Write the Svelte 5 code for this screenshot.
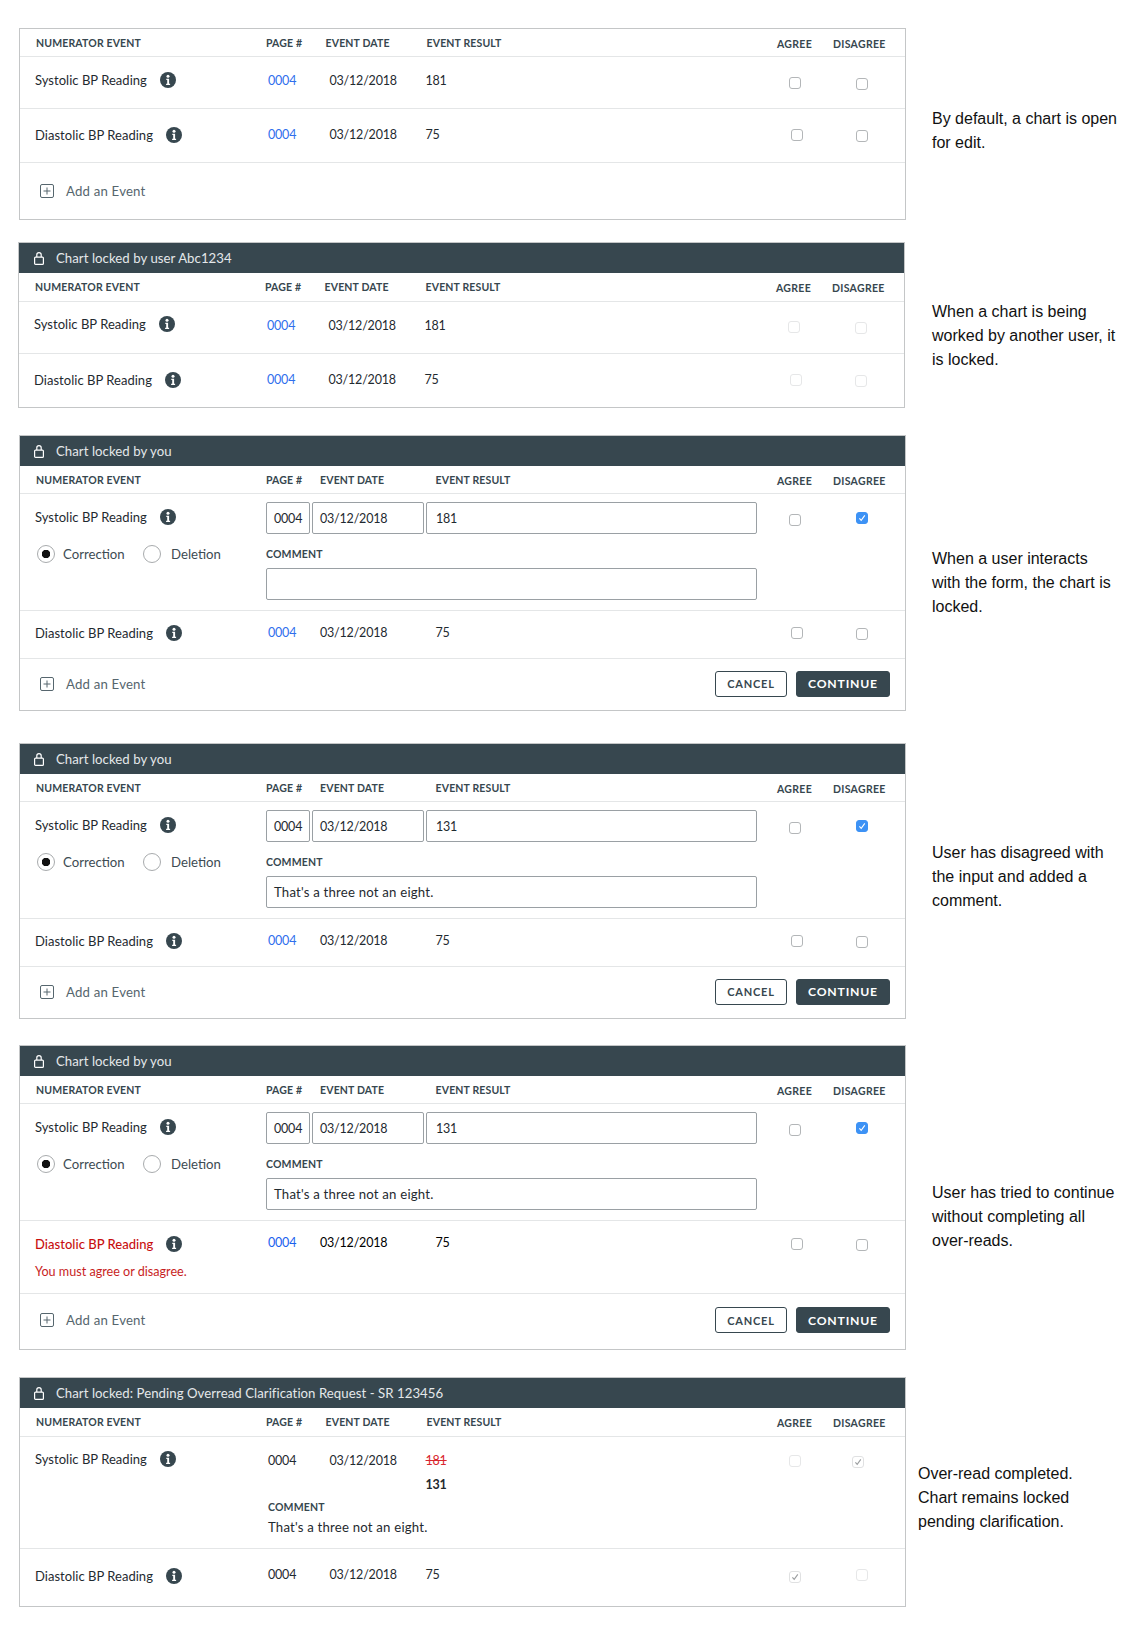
<script lang="ts">
	interface Row {
		name: string;
		result?: string;
		corrected?: string;
		comment?: string;
		agree?: string;
		disagree?: string;
		error?: boolean;
	}

	interface Chart {
		bar?: string;
		mode: 'view' | 'form';
		link?: boolean;
		actions?: boolean;
		add?: boolean;
		rows: Row[];
		note: string[];
		cls: string;
	}

	const noComment = '';
	const threeNotEight = "That's a three not an eight.";

	const charts: Chart[] = [
		{
			cls: 'c1',
			mode: 'view',
			link: true,
			add: true,
			rows: [
				{ name: 'Systolic BP Reading', result: '181' },
				{ name: 'Diastolic BP Reading', result: '75' }
			],
			note: ['By default, a chart is open', 'for edit.']
		},
		{
			cls: 'c2',
			bar: 'Chart locked by user Abc1234',
			mode: 'view',
			link: true,
			rows: [
				{ name: 'Systolic BP Reading', result: '181', agree: 'off', disagree: 'off' },
				{ name: 'Diastolic BP Reading', result: '75', agree: 'off', disagree: 'off' }
			],
			note: ['When a chart is being', 'worked by another user, it', 'is locked.']
		},
		{
			cls: 'c3',
			bar: 'Chart locked by you',
			mode: 'form',
			link: true,
			add: true,
			actions: true,
			rows: [
				{ name: 'Systolic BP Reading', result: '181', comment: noComment, disagree: 'on' },
				{ name: 'Diastolic BP Reading', result: '75' }
			],
			note: ['When a user interacts', 'with the form, the chart is', 'locked.']
		},
		{
			cls: 'c4',
			bar: 'Chart locked by you',
			mode: 'form',
			link: true,
			add: true,
			actions: true,
			rows: [
				{ name: 'Systolic BP Reading', result: '131', comment: threeNotEight, disagree: 'on' },
				{ name: 'Diastolic BP Reading', result: '75' }
			],
			note: ['User has disagreed with', 'the input and added a', 'comment.']
		},
		{
			cls: 'c5',
			bar: 'Chart locked by you',
			mode: 'form',
			link: true,
			add: true,
			actions: true,
			rows: [
				{ name: 'Systolic BP Reading', result: '131', comment: threeNotEight, disagree: 'on' },
				{ name: 'Diastolic BP Reading', result: '75', error: true }
			],
			note: ['User has tried to continue', 'without completing all', 'over-reads.']
		},
		{
			cls: 'c6',
			bar: 'Chart locked: Pending Overread Clarification Request - SR 123456',
			mode: 'view',
			rows: [
				{
					name: 'Systolic BP Reading',
					result: '181',
					corrected: '131',
					comment: threeNotEight,
					agree: 'off',
					disagree: 'done'
				},
				{ name: 'Diastolic BP Reading', result: '75', agree: 'done', disagree: 'off' }
			],
			note: ['Over-read completed.', 'Chart remains locked', 'pending clarification.']
		}
	];
</script>

{#snippet box(state: string | undefined, cls: string)}
	<span class="box {cls} {state ?? ''}">
		{#if state === 'on' || state === 'done'}
			<svg viewBox="0 0 12 12" width="12" height="12"><path d="M3.4 6.3 5.2 8.4 8.8 3.4" fill="none" stroke="currentColor" stroke-width="1.1" /></svg>
		{/if}
	</span>
{/snippet}

{#snippet info()}
	<svg class="info" viewBox="0 0 16 16" width="16" height="16">
		<circle cx="8" cy="8" r="8" fill="#37474f" />
		<circle cx="8" cy="4.3" r="1.5" fill="#fff" />
		<path d="M6.3 6.7H9.1v5h1v1.4H6.1v-1.4h1.1V8H6.3z" fill="#fff" />
	</svg>
{/snippet}

<div class="page">
	{#each charts as chart}
		<section class="chart {chart.cls}">
			<div class="panel">
				{#if chart.bar}
					<div class="bar">
						<svg class="lock" viewBox="0 0 10 13" width="10" height="13">
							<path d="M2.8 5.5V2.8a2.2 2.2 0 0 1 4.4 0v2.7" fill="none" stroke="#fff" stroke-width="1.2" />
							<rect x="0.6" y="5.1" width="8.8" height="7.3" rx="1" fill="#37474f" stroke="#fff" stroke-width="1.2" />
						</svg>
						<span>{chart.bar}</span>
					</div>
				{/if}

				<div class="head {chart.mode}">
					<span class="h-name">Numerator Event</span>
					<span>Page #</span>
					<span>Event Date</span>
					<span>Event Result</span>
					<span class="h-check">Agree</span>
					<span class="h-check">Disagree</span>
				</div>

				{#each chart.rows as row, i}
					<div class="row r{i + 1} {chart.mode}" class:err={row.error}>
						<div class="name-cell">
							<div class="name"><span>{row.name}</span>{@render info()}</div>
							{#if chart.mode === 'form' && row.comment !== undefined}
								<div class="radios">
									<span class="radio on"></span><span class="radio-label">Correction</span>
									<span class="radio"></span><span class="radio-label">Deletion</span>
								</div>
							{/if}
							{#if row.error}
								<div class="err-msg">You must agree or disagree.</div>
							{/if}
						</div>

						{#if chart.mode === 'form' && row.comment !== undefined}
							<div class="fields">
								<div class="inputs">
									<span class="input pg">0004</span>
									<span class="input dt">03/12/2018</span>
									<span class="input rs">{row.result}</span>
								</div>
								<div class="label">Comment</div>
								<span class="input cm">{row.comment}</span>
							</div>
						{:else if row.comment !== undefined}
							<span class="val pg-val">0004</span>
							<span class="val dt-val">03/12/2018</span>
							<span class="val rs-val"><s>{row.result}</s><b>{row.corrected}</b></span>
							<div class="read-comment">
								<div class="label">Comment</div>
								<div class="comment-text">{row.comment}</div>
							</div>
						{:else}
							<span class="val pg-val" class:link={chart.link}>0004</span>
							<span class="val dt-val">03/12/2018</span>
							<span class="val rs-val">{row.result}</span>
						{/if}

						{@render box(row.agree, 'agree')}
						{@render box(row.disagree, 'disagree')}
					</div>
				{/each}

				{#if chart.add}
					<div class="foot">
						<svg class="plus" viewBox="0 0 14 14" width="14" height="14">
							<rect x="0.5" y="0.5" width="13" height="13" rx="1.5" fill="none" stroke="#56666e" />
							<path d="M7 3.5v7M3.5 7h7" stroke="#56666e" />
						</svg>
						<span class="add">Add an Event</span>
						{#if chart.actions}
							<button class="btn cancel">Cancel</button>
							<button class="btn continue">Continue</button>
						{/if}
					</div>
				{/if}
			</div>

			<div class="note">
				{#each chart.note as line}
					<div>{line}</div>
				{/each}
			</div>
		</section>
	{/each}
</div>

<style>
	:global(body) {
		margin: 0;
		background: #fff;
	}

	.page {
		width: 1140px;
		height: 1631px;
		padding-top: 28px;
		box-sizing: border-box;
		font-family: Lato, sans-serif;
		font-size: 13.2px;
		color: #1f2a30;
	}

	.chart {
		display: flex;
		align-items: flex-start;
		padding-left: 19px;
	}

	.c2 { margin-top: 22px; padding-left: 18px; }
	.c3 { margin-top: 27px; }
	.c4 { margin-top: 32px; }
	.c5 { margin-top: 26px; }
	.c6 { margin-top: 27px; }

	.panel {
		flex: none;
		width: 887px;
		box-sizing: border-box;
		border: 1px solid #c4c6c7;
	}

	.note {
		flex: none;
		margin-left: 26px;
		font-family: 'Liberation Sans', Arial, sans-serif;
		font-size: 16px;
		line-height: 24px;
		color: #111;
	}

	.c1 .note { margin-top: 79px; }
	.c2 .note { margin-top: 58px; margin-left: 27px; }
	.c3 .note { margin-top: 112px; }
	.c4 .note { margin-top: 98px; }
	.c5 .note { margin-top: 136px; }
	.c6 .note { margin-top: 85px; margin-left: 12px; }

	.bar {
		display: flex;
		align-items: center;
		gap: 12px;
		height: 30px;
		padding-left: 14px;
		background: #37474f;
		color: #e4e8ea;
		letter-spacing: 0.05px;
	}

	.c2 .bar { padding-left: 15px; }

	.head {
		display: grid;
		height: 27px;
		align-items: center;
		border-bottom: 1px solid #e4e6e7;
		font-size: 10.5px;
		font-weight: 700;
		letter-spacing: 0.15px;
		text-transform: uppercase;
		color: #37474f;
	}

	.c2 .head, .c6 .head { height: 28px; }

	.h-name { padding-left: 16px; }
	.h-check { margin-top: 2px; letter-spacing: 0.3px; }

	.view {
		grid-template-columns: 246px 59.5px 101px 350.5px 56px 72px;
	}

	.form {
		grid-template-columns: 246px 54px 115.5px 341.5px 56px 72px;
	}

	.row {
		display: grid;
		align-items: start;
		border-bottom: 1px solid #e4e6e7;
		box-sizing: border-box;
	}

	.name-cell { grid-column: 1; grid-row: 1; padding-left: 15px; }
	.pg-val { grid-column: 2; grid-row: 1; }
	.dt-val { grid-column: 3; grid-row: 1; }
	.rs-val { grid-column: 4; grid-row: 1; }
	.agree { grid-column: 5; grid-row: 1; }
	.disagree { grid-column: 6; grid-row: 1; }

	.name {
		display: flex;
		align-items: center;
		gap: 13px;
		height: 16px;
		font-size: 13px;
		letter-spacing: 0.03px;
		color: #1f2a30;
	}

	.info { flex: none; }

	.val {
		display: block;
		font-size: 12.5px;
		letter-spacing: -0.2px;
		line-height: 16px;
		padding-left: 4px;
	}

	.form .val { padding-left: 0; }
	.pg-val, .form .pg-val { padding-left: 2px; }
	.rs-val { padding-left: 0; margin-left: -1px; }
	.form .rs-val { margin-left: 0; }

	.link { color: #2f6fed; }

	.box {
		display: block;
		width: 12px;
		height: 12px;
		box-sizing: border-box;
		border: 1px solid #b3b6b8;
		border-radius: 3px;
		color: #fff;
		background: #fff;
	}

	.box svg {
		display: block;
		margin: -1px;
	}

	.box.off { border-color: #e6e7e8; }

	.box.on {
		background: #3d92f5;
		border-color: #3d92f5;
	}

	.box.done {
		border-color: #e0e1e2;
		color: #9a9d9f;
	}

	.agree { margin-left: 12px; }
	.disagree { margin-left: 23px; }

	/* read-only rows */
	.r1.view { height: 52px; padding-top: 15px; }
	.r2.view { height: 54px; padding-top: 18px; }
	.r1.view .val { margin-top: 1px; }
	.r1.view .agree { margin-top: 5px; }
	.r1.view .disagree { margin-top: 6px; }
	.r2.view .agree { margin-left: 14px; margin-top: 2px; }
	.r2.view .disagree { margin-top: 3px; }

	.c2 .r2, .c6 .r2 { border-bottom: none; }

	.c2 .r1.view .name-cell, .c6 .r1.view .name-cell { margin-top: -1px; }
	.c2 .r1.view .agree { margin-top: 4px; }
	.c2 .r1.view .disagree { margin-top: 5px; }
	.c2 .r2.view { height: 53px; }

	/* form rows */
	.r1.form { height: 117px; padding-top: 8px; }
	.r1.form .name-cell { padding-top: 7px; }
	.r1.form .agree { margin-top: 12px; }
	.r1.form .disagree { margin-top: 10px; }
	.r2.form { height: 48px; padding-top: 14px; }
	.r2.form .agree { margin-left: 14px; margin-top: 2px; }
	.r2.form .disagree { margin-top: 3px; }

	.c5 .r2.form { height: 73px; padding-top: 15px; }
	.c5 .r2.form .val { margin-top: -1px; }

	.fields {
		grid-column: 2 / 5;
		grid-row: 1;
		width: 491px;
	}

	.inputs {
		display: flex;
		gap: 2px;
	}

	.input {
		display: block;
		height: 32px;
		box-sizing: border-box;
		border: 1px solid #9aa0a4;
		border-radius: 2px;
		line-height: 31px;
		padding-left: 7px;
		font-size: 12.5px;
		letter-spacing: -0.2px;
	}

	.pg { width: 44px; }
	.dt { width: 112px; }
	.rs { flex: 1; padding-left: 9px; }

	.cm {
		width: 491px;
		margin-top: 6px;
		font-size: 13.2px;
		letter-spacing: 0.2px;
	}

	.label {
		margin-top: 13px;
		line-height: 15px;
		font-size: 10.5px;
		font-weight: 700;
		letter-spacing: 0.15px;
		text-transform: uppercase;
		color: #37474f;
	}

	.radios {
		display: flex;
		align-items: center;
		margin-top: 20px;
		padding-left: 2px;
		color: #3d4b53;
	}

	.radio {
		flex: none;
		width: 18px;
		height: 18px;
		box-sizing: border-box;
		border: 1px solid #a8abad;
		border-radius: 50%;
		background: #fff;
	}

	.radio.on {
		background: radial-gradient(circle, #111 0 4px, #fff 4.5px);
	}

	.radio-label { margin-left: 8px; width: 80px; }
	.radio-label:last-child { margin-left: 10px; }

	/* error row */
	.err .name { color: #c80f0f; font-weight: 500; }
	.err .val { color: #000; }
	.err .link { color: #1a62ee; }

	.err-msg {
		margin-top: 12px;
		line-height: 16px;
		font-size: 12.6px;
		color: #c81e1e;
	}

	/* completed row */
	.read-comment {
		grid-column: 2 / 5;
		grid-row: 1;
		margin-top: 48px;
		padding-left: 2px;
	}

	.read-comment .label { margin-top: 0; }

	.comment-text {
		margin-top: 4px;
		line-height: 16px;
		letter-spacing: 0.2px;
	}

	.c6 .r1.view { height: 112px; }
	.c6 .r1 .agree { margin-top: 3px; }
	.c6 .r1 .disagree { margin-left: 19px; margin-top: 4px; }
	.c6 .r2.view { height: 57px; padding-top: 19px; }
	.c6 .r2 .val { margin-top: -1px; }
	.c6 .r2 .agree { margin-left: 12px; margin-top: 3px; }
	.c6 .r2 .disagree { margin-top: 1px; }

	s {
		display: block;
		color: #d9282f;
		text-decoration-color: #d9282f;
	}

	b {
		display: block;
		margin-top: 8px;
		font-weight: 700;
	}

	.foot {
		display: flex;
		align-items: center;
		height: 49px;
		padding: 0 15px 2px 20px;
		color: #56666e;
	}

	.c1 .foot { height: 56px; padding-bottom: 0; }
	.c5 .foot { height: 52px; padding-bottom: 3px; }

	.add { margin-left: 12px; flex: 1; letter-spacing: 0.2px; }

	.btn {
		height: 26px;
		box-sizing: border-box;
		border-radius: 3px;
		border: 1px solid #37474f;
		font-family: Lato, sans-serif;
		font-weight: 700;
		letter-spacing: 0.8px;
		text-transform: uppercase;
		padding: 0;
	}

	.cancel {
		width: 72px;
		background: #fff;
		color: #37474f;
		font-size: 11px;
	}

	.continue {
		width: 94px;
		margin-left: 9px;
		background: #37474f;
		color: #fff;
		font-size: 12.2px;
	}
</style>
